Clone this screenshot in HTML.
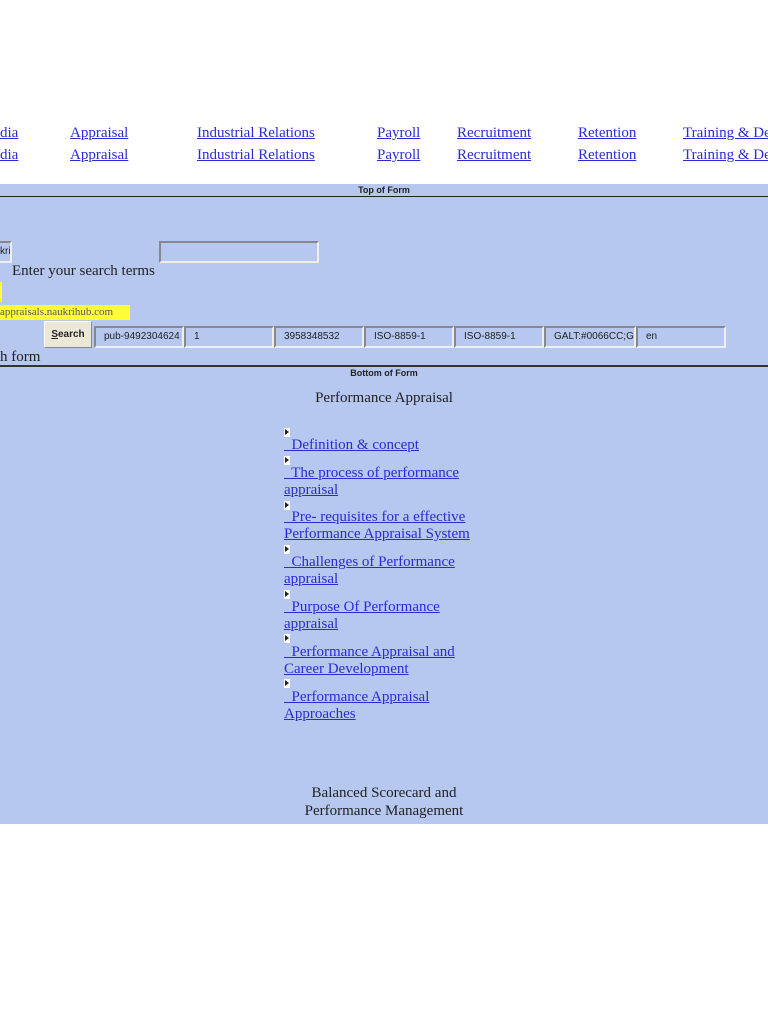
<!DOCTYPE html>
<html><head><meta charset="utf-8"><style>
html,body{margin:0;padding:0;width:768px;height:1024px;background:#fff;overflow:hidden;}
#w{position:relative;width:768px;height:1024px;overflow:hidden;font-family:"Liberation Serif",serif;}
.a{position:absolute;white-space:nowrap;}
a{color:#2b2bd6;text-decoration:underline;}
.nav{font-size:15px;}
.blue{position:absolute;left:0;top:184px;width:768px;height:640px;background:#b6c8ef;}
.sm{font-family:"Liberation Sans",sans-serif;font-size:9px;font-weight:bold;color:#222;}
.line{position:absolute;left:0;width:768px;height:1px;background:#222;}
.inp{position:absolute;height:20px;box-sizing:border-box;border:2px solid;border-color:#888 #eee #eee #888;background:#b6c8ef;font-family:"Liberation Sans",sans-serif;font-size:10px;color:#222;padding:3px 0 0 8px;white-space:nowrap;overflow:hidden;}
.tri{position:absolute;width:0;height:0;border-left:4px solid #222;border-top:3px solid transparent;border-bottom:3px solid transparent;}
.tb{position:absolute;width:6px;height:9px;background:#fff;}
.lk{font-size:15px;line-height:17px;}
</style></head><body><div id="w">
<div class="a nav" style="left:0;top:125px"><a>dia</a></div>
<div class="a nav" style="left:70px;top:125px"><a>Appraisal</a></div>
<div class="a nav" style="left:197px;top:125px"><a>Industrial Relations</a></div>
<div class="a nav" style="left:377px;top:125px"><a>Payroll</a></div>
<div class="a nav" style="left:457px;top:125px"><a>Recruitment</a></div>
<div class="a nav" style="left:578px;top:125px"><a>Retention</a></div>
<div class="a nav" style="left:683px;top:125px"><a>Training &amp; Dev</a></div>
<div class="a nav" style="left:0;top:147px"><a>dia</a></div>
<div class="a nav" style="left:70px;top:147px"><a>Appraisal</a></div>
<div class="a nav" style="left:197px;top:147px"><a>Industrial Relations</a></div>
<div class="a nav" style="left:377px;top:147px"><a>Payroll</a></div>
<div class="a nav" style="left:457px;top:147px"><a>Recruitment</a></div>
<div class="a nav" style="left:578px;top:147px"><a>Retention</a></div>
<div class="a nav" style="left:683px;top:147px"><a>Training &amp; Dev</a></div>

<div class="blue"></div>
<div class="a sm" style="left:0;width:768px;text-align:center;top:185px">Top of Form</div>
<div class="line" style="top:196px"></div>
<div class="inp" style="left:-10px;top:241px;width:22px;height:22px;padding-left:8px;">kri</div>
<div class="inp" style="left:159px;top:241px;width:160px;height:22px;"></div>
<div class="a" style="left:12px;top:263px;font-size:15px;color:#222">Enter your search terms</div>
<div class="a" style="left:0;top:282px;width:2px;height:20px;background:#ffff33"></div>
<div class="a" style="left:0;top:305px;height:15px;width:130px;background:#ffff33;font-size:11px;line-height:15px;color:#555;font-family:'Liberation Serif',serif">appraisals.naukrihub.com</div>
<div class="a" style="left:44px;top:321px;width:48px;height:27px;box-sizing:border-box;background:#ece8d8;border:1px solid;border-color:#fff #888 #888 #fff;font-family:'Liberation Sans',sans-serif;font-size:10px;font-weight:bold;color:#222;text-align:center;line-height:25px"><u>S</u>earch</div>
<div class="inp" style="left:94px;top:326px;width:90px;height:22px;">pub-9492304624</div>
<div class="inp" style="left:184px;top:326px;width:90px;height:22px;">1</div>
<div class="inp" style="left:274px;top:326px;width:90px;height:22px;">3958348532</div>
<div class="inp" style="left:364px;top:326px;width:90px;height:22px;">ISO-8859-1</div>
<div class="inp" style="left:454px;top:326px;width:90px;height:22px;">ISO-8859-1</div>
<div class="inp" style="left:544px;top:326px;width:92px;height:22px;">GALT:#0066CC;G</div>
<div class="inp" style="left:636px;top:326px;width:90px;height:22px;">en</div>
<div class="a" style="left:0;top:349px;font-size:15px;color:#222">h form</div>
<div class="line" style="top:365px;height:2px;background:#333"></div>
<div class="a sm" style="left:0;width:768px;text-align:center;top:368px">Bottom of Form</div>
<div class="a" style="left:0;width:768px;text-align:center;top:390px;font-size:15px;color:#222">Performance Appraisal</div>

<div class="tb" style="left:284px;top:428px"></div><div class="tri" style="left:285px;top:429px"></div>
<div class="a lk" style="left:284px;top:437px"><a>&nbsp; Definition &amp; concept </a></div>
<div class="tb" style="left:284px;top:456px"></div><div class="tri" style="left:285px;top:457px"></div>
<div class="a lk" style="left:284px;top:465px"><a>&nbsp; The process of performance </a><br><a>appraisal</a></div>
<div class="tb" style="left:284px;top:501px"></div><div class="tri" style="left:285px;top:502px"></div>
<div class="a lk" style="left:284px;top:509px"><a>&nbsp; Pre- requisites for a effective</a><br><a>Performance Appraisal System</a></div>
<div class="tb" style="left:284px;top:545px"></div><div class="tri" style="left:285px;top:546px"></div>
<div class="a lk" style="left:284px;top:554px"><a>&nbsp; Challenges of Performance </a><br><a>appraisal</a></div>
<div class="tb" style="left:284px;top:590px"></div><div class="tri" style="left:285px;top:591px"></div>
<div class="a lk" style="left:284px;top:599px"><a>&nbsp; Purpose Of Performance </a><br><a>appraisal</a></div>
<div class="tb" style="left:284px;top:634px"></div><div class="tri" style="left:285px;top:635px"></div>
<div class="a lk" style="left:284px;top:644px"><a>&nbsp; Performance Appraisal and </a><br><a>Career Development</a></div>
<div class="tb" style="left:284px;top:679px"></div><div class="tri" style="left:285px;top:680px"></div>
<div class="a lk" style="left:284px;top:689px"><a>&nbsp; Performance Appraisal </a><br><a>Approaches</a></div>

<div class="a" style="left:0;width:768px;text-align:center;top:784px;font-size:15px;line-height:18px;color:#222">Balanced Scorecard and<br>Performance Management</div>
</div></body></html>
